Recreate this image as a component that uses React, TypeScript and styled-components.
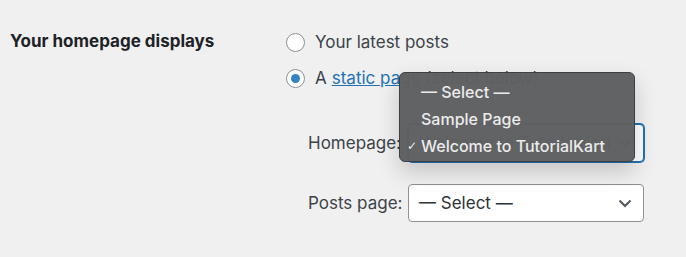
import styled, { createGlobalStyle } from 'styled-components';

const Global = createGlobalStyle`
  html, body {
    margin: 0;
    background: #f0f0f1;
  }
  body {
    font-family: Inter, "Liberation Sans", Arial, sans-serif;
    color: #1d2327;
  }
`;

const Page = styled.div`
  display: grid;
  grid-template-columns: 276px 1fr;
  padding: 30px 0 0 10px;
  width: 686px;
  height: 257px;
  box-sizing: border-box;
  overflow: hidden;
`;

const Heading = styled.div`
  font-size: 17px;
  font-weight: 700;
  line-height: 22px;
`;

const Options = styled.div`
  display: flex;
  flex-direction: column;
`;

const RadioRow = styled.label<{ $first?: boolean }>`
  display: flex;
  align-items: center;
  gap: 10px;
  height: 36px;
  margin-top: ${p => (p.$first ? '-6px' : '0')};
  font-size: 17px;
  color: #3c434a;
`;

const Radio = styled.span<{ $checked?: boolean }>`
  width: 17px;
  height: 17px;
  border-radius: 50%;
  border: 1px solid #8c8f94;
  background: #fff;
  display: flex;
  align-items: center;
  justify-content: center;
  flex-shrink: 0;

  &::after {
    content: '';
    display: ${p => (p.$checked ? 'block' : 'none')};
    width: 9px;
    height: 9px;
    border-radius: 50%;
    background: #3582c4;
  }
`;

const Link = styled.a`
  color: #2271b1;
  text-decoration: underline;
  margin-left: 5px;
`;

const Fields = styled.div`
  display: grid;
  grid-template-columns: 100px 236px;
  row-gap: 22px;
  align-items: center;
  margin: 28px 0 0 22px;
`;

const FieldLabel = styled.span`
  font-size: 17px;
  color: #3c434a;
`;

const SelectWrap = styled.div`
  position: relative;
`;

const Select = styled.div<{ $focused?: boolean }>`
  height: 38px;
  box-sizing: border-box;
  border: 1px solid ${p => (p.$focused ? '#2271b1' : '#8c8f94')};
  box-shadow: ${p => (p.$focused ? '0 0 0 1px #2271b1' : 'none')};
  border-radius: 4px;
  background: #fff;
  display: flex;
  align-items: center;
  justify-content: space-between;
  padding: 0 11px 0 10px;
  font-size: 17px;
  color: #2c3338;
`;

const Menu = styled.div`
  position: absolute;
  left: -9px;
  top: -52px;
  width: 236px;
  height: 90px;
  box-sizing: border-box;
  padding-top: 6px;
  background: rgba(94, 96, 98, 0.98);
  border: 1px solid #3e3f41;
  border-radius: 6px;
  box-shadow: 0 10px 22px rgba(0, 0, 0, 0.18);
  z-index: 2;
`;

const MenuItem = styled.div`
  position: relative;
  height: 27px;
  line-height: 27px;
  padding-left: 21px;
  font-size: 16px;
  font-weight: 500;
  color: #ececec;
`;

const Check = styled.span`
  position: absolute;
  left: 7px;
  font-size: 12px;
  font-family: "DejaVu Sans", sans-serif;
`;

const Chevron = () => (
  <svg width="14" height="9" viewBox="0 0 14 9">
    <path d="M1.5 1.5 L7 7 L12.5 1.5" fill="none" stroke="#50575e" strokeWidth="2" />
  </svg>
);

export default function App() {
  return (
    <>
      <Global />
      <Page>
        <Heading>Your homepage displays</Heading>
        <Options>
          <RadioRow $first>
            <Radio />
            Your latest posts
          </RadioRow>
          <RadioRow>
            <Radio $checked />
            <span>
              A<Link href="#">static page</Link> (select below)
            </span>
          </RadioRow>
          <Fields>
            <FieldLabel>Homepage:</FieldLabel>
            <SelectWrap>
              <Select $focused>
                Welcome to TutorialKart
                <Chevron />
              </Select>
              <Menu>
                <MenuItem>— Select —</MenuItem>
                <MenuItem>Sample Page</MenuItem>
                <MenuItem>
                  <Check>✓</Check>
                  Welcome to TutorialKart
                </MenuItem>
              </Menu>
            </SelectWrap>
            <FieldLabel>Posts page:</FieldLabel>
            <Select>
              — Select —
              <Chevron />
            </Select>
          </Fields>
        </Options>
      </Page>
    </>
  );
}
